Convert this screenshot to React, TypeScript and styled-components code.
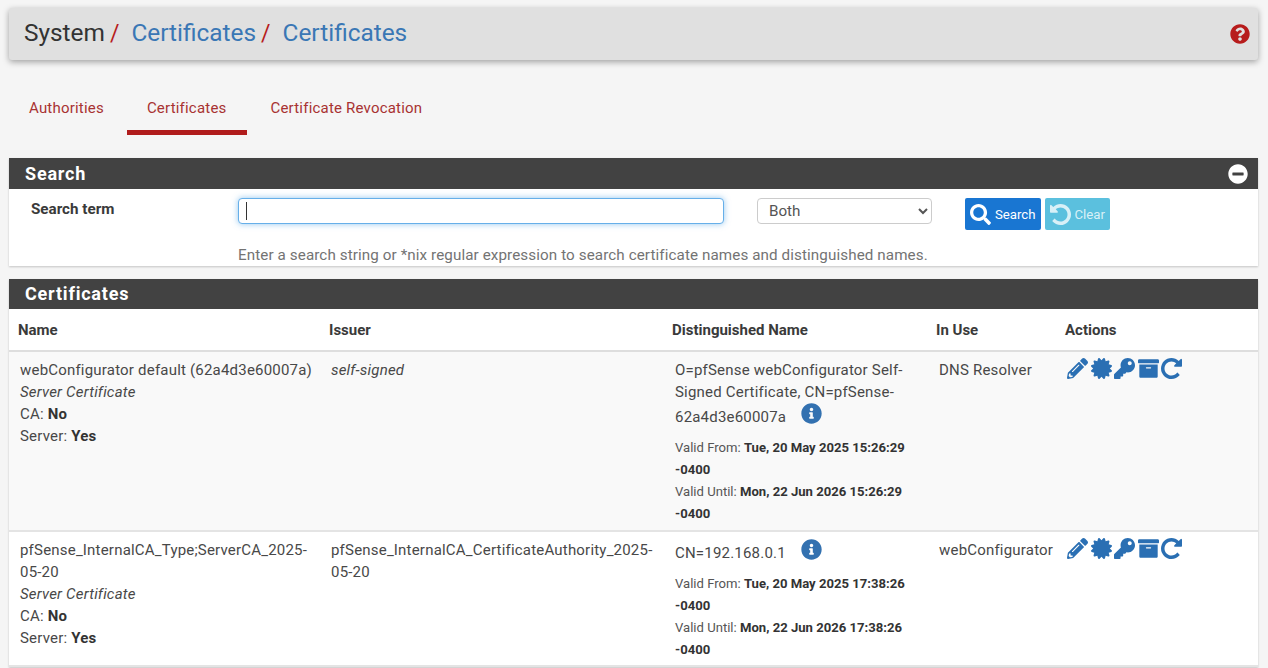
import React from "react";
import styled, { createGlobalStyle } from "styled-components";
import {
  FaArchive,
  FaCertificate,
  FaInfoCircle,
  FaKey,
  FaMinusCircle,
  FaPencilAlt,
  FaQuestionCircle,
  FaSearch,
} from "react-icons/fa";

const GlobalStyle = createGlobalStyle`
  html, body {
    margin: 0;
    padding: 0;
    height: 668px;
    overflow: hidden;
    background: #f5f5f5;
    font-family: Roboto, "Liberation Sans", sans-serif;
    color: #333;
  }
  * { box-sizing: border-box; }
`;

const Page = styled.div`
  width: 1268px;
  padding: 8px 10px 0 9px;
`;

const Breadcrumb = styled.div`
  height: 52px;
  background: #e0e0e0;
  border-radius: 3px;
  box-shadow: 0 2px 6px rgba(0, 0, 0, 0.35);
  display: flex;
  align-items: center;
  justify-content: space-between;
  padding: 0 8px 4px 15px;
  font-size: 24.4px;
`;

const Crumbs = styled.div`
  display: flex;
  align-items: baseline;
`;

const Crumb = styled.span`
  color: #333;
`;

const CrumbLink = styled.span`
  color: #3a77b5;
  margin-left: 12px;
`;

const Slash = styled.span`
  color: #b71c1c;
  margin-left: 5px;
  font-size: 23px;
`;

const HelpIcon = styled(FaQuestionCircle)`
  color: #b71c1c;
  font-size: 20px;
  margin-top: 4px;
`;

const Tabs = styled.div`
  display: flex;
  margin-top: 30px;
  height: 45px;
`;

const Tab = styled.div<{ $active?: boolean }>`
  padding: 9px 20px 0;
  height: 45px;
  font-size: 15px;
  letter-spacing: 0.2px;
  color: #a83232;
  border-bottom: 5px solid ${(p) => (p.$active ? "#b01c1c" : "transparent")};
  &:first-child {
    padding-right: 23px;
  }
  &:last-child {
    padding-left: 24px;
  }
`;

const Panel = styled.section`
  background: #fff;
  box-shadow: 0 1px 2px rgba(0, 0, 0, 0.2);
  margin-top: 13px;
`;

const FirstPanel = styled(Panel)`
  margin-top: 23px;
`;

const PanelHeading = styled.div<{ $short?: boolean }>`
  height: ${(p) => (p.$short ? "30px" : "31px")};
  background: #424242;
  color: #fff;
  font-size: 18px;
  font-weight: 700;
  letter-spacing: 0.8px;
  display: flex;
  align-items: center;
  justify-content: space-between;
  padding: 0 10px ${(p) => (p.$short ? "1px" : "0")} 16px;
`;

const CollapseIcon = styled(FaMinusCircle)`
  color: #fff;
  font-size: 20px;
`;

const SearchBody = styled.div`
  height: 77px;
  padding: 0 0 0 22px;
  display: grid;
  grid-template-columns: 207px 486px 33px 175px 33px auto;
  grid-template-rows: 44px 33px;
`;

const SearchLabel = styled.label`
  font-size: 15.2px;
  font-weight: 700;
  margin-top: 11px;
  color: #3a3a3a;
`;

const InputWrap = styled.div`
  position: relative;
  grid-column: 2;
  height: 26px;
  margin-top: 9px;
`;

const SearchInput = styled.input`
  width: 486px;
  height: 26px;
  display: block;
  border: 1px solid #66afe9;
  border-radius: 4px;
  box-shadow: 0 0 6px rgba(102, 175, 233, 0.7);
  outline: none;
  padding: 0 7px;
`;

const Caret = styled.span`
  position: absolute;
  left: 8px;
  top: 4px;
  width: 1px;
  height: 18px;
  background: #333;
`;

const SearchSelect = styled.select`
  grid-column: 4;
  width: 175px;
  height: 26px;
  margin-top: 9px;
  border: 1px solid #ccc;
  border-radius: 4px;
  background: #fff;
  color: #555;
  font-family: Roboto, sans-serif;
  font-size: 15.2px;
  padding: 0 7px;
`;

const Buttons = styled.div`
  grid-column: 6;
  display: flex;
  gap: 4px;
  margin-top: 9px;
`;

const Button = styled.button<{ $tone: string; $fade?: boolean }>`
  height: 32px;
  border: 0;
  border-radius: 2px;
  background: ${(p) => p.$tone};
  color: ${(p) => (p.$fade ? "#d8f0f7" : "#fff")};
  display: flex;
  align-items: center;
  gap: 4px;
  padding: 0 5px;
  font-family: Roboto, sans-serif;
  font-size: 13.2px;
  svg {
    font-size: 21px;
  }
`;

const SearchHint = styled.div`
  grid-column: 2 / -1;
  grid-row: 2;
  font-size: 15.2px;
  color: #737373;
  letter-spacing: 0.1px;
  padding-top: 13px;
`;

const Table = styled.table`
  width: 100%;
  border-collapse: collapse;
  table-layout: fixed;
`;

const HeadCell = styled.th`
  height: 42px;
  text-align: left;
  font-weight: 700;
  font-size: 15px;
  color: #3a3a3a;
  padding: 0 0 0 9px;
  border-bottom: 2px solid #dedede;
  &:nth-child(n + 3) {
    padding-left: 8px;
  }
`;

const Row = styled.tr<{ $shaded?: boolean; $tall?: boolean }>`
  background: ${(p) => (p.$shaded ? "#f9f9f9" : "#fff")};
  border-bottom: 2px solid #e4e4e4;
  height: ${(p) => (p.$tall ? "180px" : "135px")};
`;

const Cell = styled.td`
  vertical-align: top;
  padding: 7px 8px 0 11px;
  font-size: 15px;
  letter-spacing: 0.2px;
  line-height: 22px;
  color: #484848;
  b {
    color: #333;
  }
`;

const ValidBlock = styled.div`
  font-size: 13.1px;
  letter-spacing: 0;
  margin-top: 9px;
  line-height: 22px;
  color: #555;
`;

const InfoIcon = styled(FaInfoCircle)`
  color: #3371b0;
  font-size: 21px;
  margin-left: 15px;
  vertical-align: -2px;
`;

const Actions = styled.div`
  display: flex;
  align-items: center;
  gap: 2.6px;
  color: #2a6fb3;
  height: 22px;
  font-size: 21px;
  margin: -2px 0 0 -1px;
`;

// Font Awesome 4 glyphs, the redo and undo of version 5 are drawn differently
const REPEAT_PATH =
  "M1664 256v448q0 26-19 45t-45 19h-448q-42 0-59-40-17-39 14-69l138-138q-148-137-349-137-104 0-198.5 40.5t-163.5 109.5-109.5 163.5-40.5 198.5 40.5 198.5 109.5 163.5 163.5 109.5 198.5 40.5q119 0 225-52t179-147q7-10 23-12 15 0 25 9l137 138q9 8 9.5 20.5t-7.5 22.5q-109 132-264 204.5t-327 72.5q-156 0-298-61t-245-164-164-245-61-298 61-298 164-245 245-164 298-61q147 0 284.5 55.5t244.5 156.5l130-129q29-31 70-14 39 17 39 59z";
const UNDO_PATH =
  "M1664 896q0 156-61 298t-164 245-245 164-298 61q-172 0-327-72.5t-264-204.5q-7-10-6.5-22.5t8.5-20.5l137-138q10-9 25-9 16 2 23 12 73 95 179 147t225 52q104 0 198.5-40.5t163.5-109.5 109.5-163.5 40.5-198.5-40.5-198.5-109.5-163.5-163.5-109.5-198.5-40.5q-98 0-188 35.5t-160 101.5l137 138q31 30 14 69-17 40-59 40h-448q-26 0-45-19t-19-45v-448q0-42 40-59 39-17 69 14l130 129q107-101 244.5-156.5t284.5-55.5q156 0 298 61t245 164 164 245 61 298z";

const GlyphIcon = ({ d }: { d: string }) => (
  <svg width="21" height="21" viewBox="128 128 1536 1536" fill="currentColor">
    <path d={d} />
  </svg>
);

const columns = [311, 344, 264, 129, 201];

const rows = [
  {
    name: "webConfigurator default (62a4d3e60007a)",
    issuer: <i>self-signed</i>,
    dn: "O=pfSense webConfigurator Self-Signed Certificate, CN=pfSense-62a4d3e60007a",
    from: "Tue, 20 May 2025 15:26:29 -0400",
    until: "Mon, 22 Jun 2026 15:26:29 -0400",
    use: "DNS Resolver",
    first: true,
  },
  {
    name: "pfSense_InternalCA_Type;ServerCA_2025-05-20",
    issuer: "pfSense_InternalCA_CertificateAuthority_2025-05-20",
    dn: "CN=192.168.0.1",
    from: "Tue, 20 May 2025 17:38:26 -0400",
    until: "Mon, 22 Jun 2026 17:38:26 -0400",
    use: "webConfigurator",
    first: false,
  },
];

export default function App() {
  return (
    <Page>
      <GlobalStyle />
      <Breadcrumb>
        <Crumbs>
          <Crumb>System</Crumb>
          <Slash>/</Slash>
          <CrumbLink>Certificates</CrumbLink>
          <Slash>/</Slash>
          <CrumbLink>Certificates</CrumbLink>
        </Crumbs>
        <HelpIcon />
      </Breadcrumb>

      <Tabs>
        <Tab>Authorities</Tab>
        <Tab $active>Certificates</Tab>
        <Tab>Certificate Revocation</Tab>
      </Tabs>

      <FirstPanel>
        <PanelHeading>
          Search
          <CollapseIcon />
        </PanelHeading>
        <SearchBody>
          <SearchLabel>Search term</SearchLabel>
          <InputWrap>
            <SearchInput />
            <Caret />
          </InputWrap>
          <SearchSelect defaultValue="Both">
            <option>Both</option>
          </SearchSelect>
          <Buttons>
            <Button $tone="#1976d2">
              <FaSearch />
              Search
            </Button>
            <Button $tone="#5bc0de" $fade>
              <GlyphIcon d={UNDO_PATH} />
              Clear
            </Button>
          </Buttons>
          <SearchHint>
            Enter a search string or *nix regular expression to search certificate names and
            distinguished names.
          </SearchHint>
        </SearchBody>
      </FirstPanel>

      <Panel>
        <PanelHeading $short>Certificates</PanelHeading>
        <Table>
          <colgroup>
            {columns.map((w) => (
              <col key={w} width={w} />
            ))}
          </colgroup>
          <thead>
            <tr>
              <HeadCell>Name</HeadCell>
              <HeadCell>Issuer</HeadCell>
              <HeadCell>Distinguished Name</HeadCell>
              <HeadCell>In Use</HeadCell>
              <HeadCell>Actions</HeadCell>
            </tr>
          </thead>
          <tbody>
            {rows.map((r) => (
              <Row key={r.use} $shaded={r.first} $tall={r.first}>
                <Cell>
                  {r.name}
                  <br />
                  <i>Server Certificate</i>
                  <br />
                  CA: <b>No</b>
                  <br />
                  Server: <b>Yes</b>
                </Cell>
                <Cell>{r.issuer}</Cell>
                <Cell>
                  {r.dn}
                  <InfoIcon />
                  <ValidBlock>
                    Valid From: <b>{r.from}</b>
                    <br />
                    Valid Until: <b>{r.until}</b>
                  </ValidBlock>
                </Cell>
                <Cell>{r.use}</Cell>
                <Cell>
                  <Actions>
                    <FaPencilAlt />
                    <FaCertificate />
                    <FaKey />
                    <FaArchive />
                    <GlyphIcon d={REPEAT_PATH} />
                  </Actions>
                </Cell>
              </Row>
            ))}
          </tbody>
        </Table>
      </Panel>
    </Page>
  );
}
